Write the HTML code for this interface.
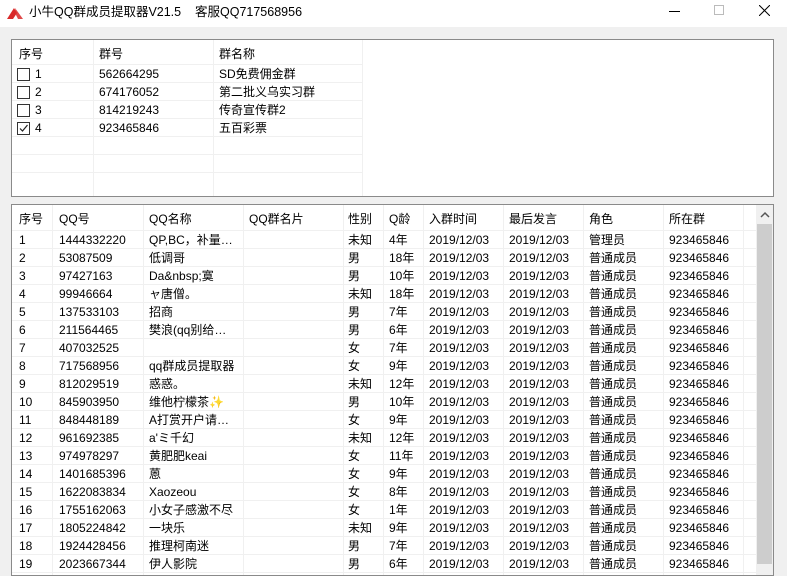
<!DOCTYPE html>
<html><head><meta charset="utf-8">
<style>
*{margin:0;padding:0;box-sizing:border-box}
body{width:787px;height:574px;overflow:hidden;background:#f0f0f0;font-family:"Liberation Sans","Microsoft YaHei","Noto Sans CJK SC",sans-serif;font-size:12px;color:#000;position:relative}
.title{position:absolute;left:0;top:0;width:787px;height:27px;background:#fff}
.title .t{position:absolute;left:29px;top:5px;font-size:12.5px;line-height:14px}
.abs{position:absolute;white-space:nowrap;line-height:14px}
.panel{position:absolute;background:#fff;border:1px solid #8a8a8a;overflow:hidden}
.vl{position:absolute;width:1px;background:#f0f0f0}
.hl{position:absolute;height:1px;background:#f0f0f0}
.cb{position:absolute;width:13px;height:13px;border:1px solid #333;background:#fff}
</style></head><body>
<div class="title">
<svg class="abs" style="left:7px;top:7px" width="16" height="12"><polygon points="0,12 7,1 10,6 6,12" fill="#d92a2a"/><polygon points="8,1 16,12 11,12 9,8" fill="#d92a2a" opacity=".85"/></svg>
<span class="t">小牛QQ群成员提取器V21.5&nbsp;&nbsp;&nbsp;&nbsp;客服QQ717568956</span>
<div class="abs" style="left:669px;top:11px;width:11px;height:1px;background:#000"></div>
<div class="abs" style="left:714px;top:5px;width:10px;height:10px;border:1px solid #bbb"></div>
<svg class="abs" style="left:759px;top:5px" width="11" height="11"><path d="M0 0L11 11M11 0L0 11" stroke="#000" stroke-width="1"/></svg>
</div>

<div class="panel" style="left:11px;top:39px;width:763px;height:158px" id="p1"></div>
<div class="panel" style="left:11px;top:204px;width:763px;height:372px" id="p2"></div>

<script>
function el(parent,html){parent.insertAdjacentHTML('beforeend',html)}
var p1=document.getElementById('p1');
[81,201,350].forEach(function(x){el(p1,'<div class="vl" style="left:'+x+'px;top:0;height:158px"></div>')});
for(var i=0;i<7;i++){el(p1,'<div class="hl" style="left:0;width:350px;top:'+(24+18*i)+'px"></div>')}
el(p1,'<span class="abs" style="left:7px;top:7px">序号</span><span class="abs" style="left:87px;top:7px">群号</span><span class="abs" style="left:207px;top:7px">群名称</span>');
var g=[["1","562664295","SD免费佣金群"],["2","674176052","第二批义乌实习群"],["3","814219243","传奇宣传群2"],["4","923465846","五百彩票"]];
g.forEach(function(r,i){var y=27+18*i;
el(p1,'<div class="cb" style="left:5px;top:'+(y+1)+'px">'+(i==3?'<svg width="11" height="11" style="position:absolute;left:0;top:0"><path d="M2 5.5L4.5 8L9.5 2" stroke="#222" fill="none" stroke-width="1.2"/></svg>':'')+'</div>');
el(p1,'<span class="abs" style="left:23px;top:'+y+'px">'+r[0]+'</span><span class="abs" style="left:87px;top:'+y+'px">'+r[1]+'</span><span class="abs" style="left:207px;top:'+y+'px">'+r[2]+'</span>');});

var p2=document.getElementById('p2');
var cx=[40,131,231,331,371,411,491,571,651,731];
cx.forEach(function(x){el(p2,'<div class="vl" style="left:'+x+'px;top:0;height:372px"></div>')});
for(var i=0;i<20;i++){el(p2,'<div class="hl" style="left:0;width:744px;top:'+(25+18*i)+'px"></div>')}
var tx=[7,47,137,237,336,377,417,497,577,657];
var hd=["序号","QQ号","QQ名称","QQ群名片","性别","Q龄","入群时间","最后发言","角色","所在群"];
hd.forEach(function(h,i){el(p2,'<span class="abs" style="left:'+tx[i]+'px;top:7px">'+h+'</span>')});
var d=[
["1444332220","QP,BC，补量…","未知","4年","管理员"],
["53087509","低调哥","男","18年"],
["97427163","Da&amp;nbsp;寞","男","10年"],
["99946664","ャ唐僧。","未知","18年"],
["137533103","招商","男","7年"],
["211564465","樊浪(qq别给…","男","6年"],
["407032525","","女","7年"],
["717568956","qq群成员提取器","女","9年"],
["812029519","惑惑。","未知","12年"],
["845903950","维他柠檬茶✨","男","10年"],
["848448189","A打赏开户请…","女","9年"],
["961692385","a'ミ千幻","未知","12年"],
["974978297","黄肥肥keai","女","11年"],
["1401685396","蒽","女","9年"],
["1622083834","Xaozeou","女","8年"],
["1755162063","小女子感激不尽","女","1年"],
["1805224842","一块乐","未知","9年"],
["1924428456","推理柯南迷","男","7年"],
["2023667344","伊人影院","男","6年"]];
d.forEach(function(r,i){var y=28+18*i;
var v=[String(i+1),r[0],r[1],"",r[2],r[3],"2019/12/03","2019/12/03",r[4]||"普通成员","923465846"];
v.forEach(function(t,j){if(t)el(p2,'<span class="abs" style="left:'+tx[j]+'px;top:'+y+'px">'+t+'</span>')});});
el(p2,'<div class="abs" style="left:744px;top:0;width:18px;height:372px;background:#f0f0f0"></div>');
el(p2,'<svg class="abs" style="left:748px;top:6px" width="10" height="7"><path d="M1 6L5 2L9 6" stroke="#555" fill="none" stroke-width="1.5"/></svg>');
el(p2,'<div class="abs" style="left:745px;top:19px;width:15px;height:340px;background:#cdcdcd"></div>');
</script>
</body></html>
